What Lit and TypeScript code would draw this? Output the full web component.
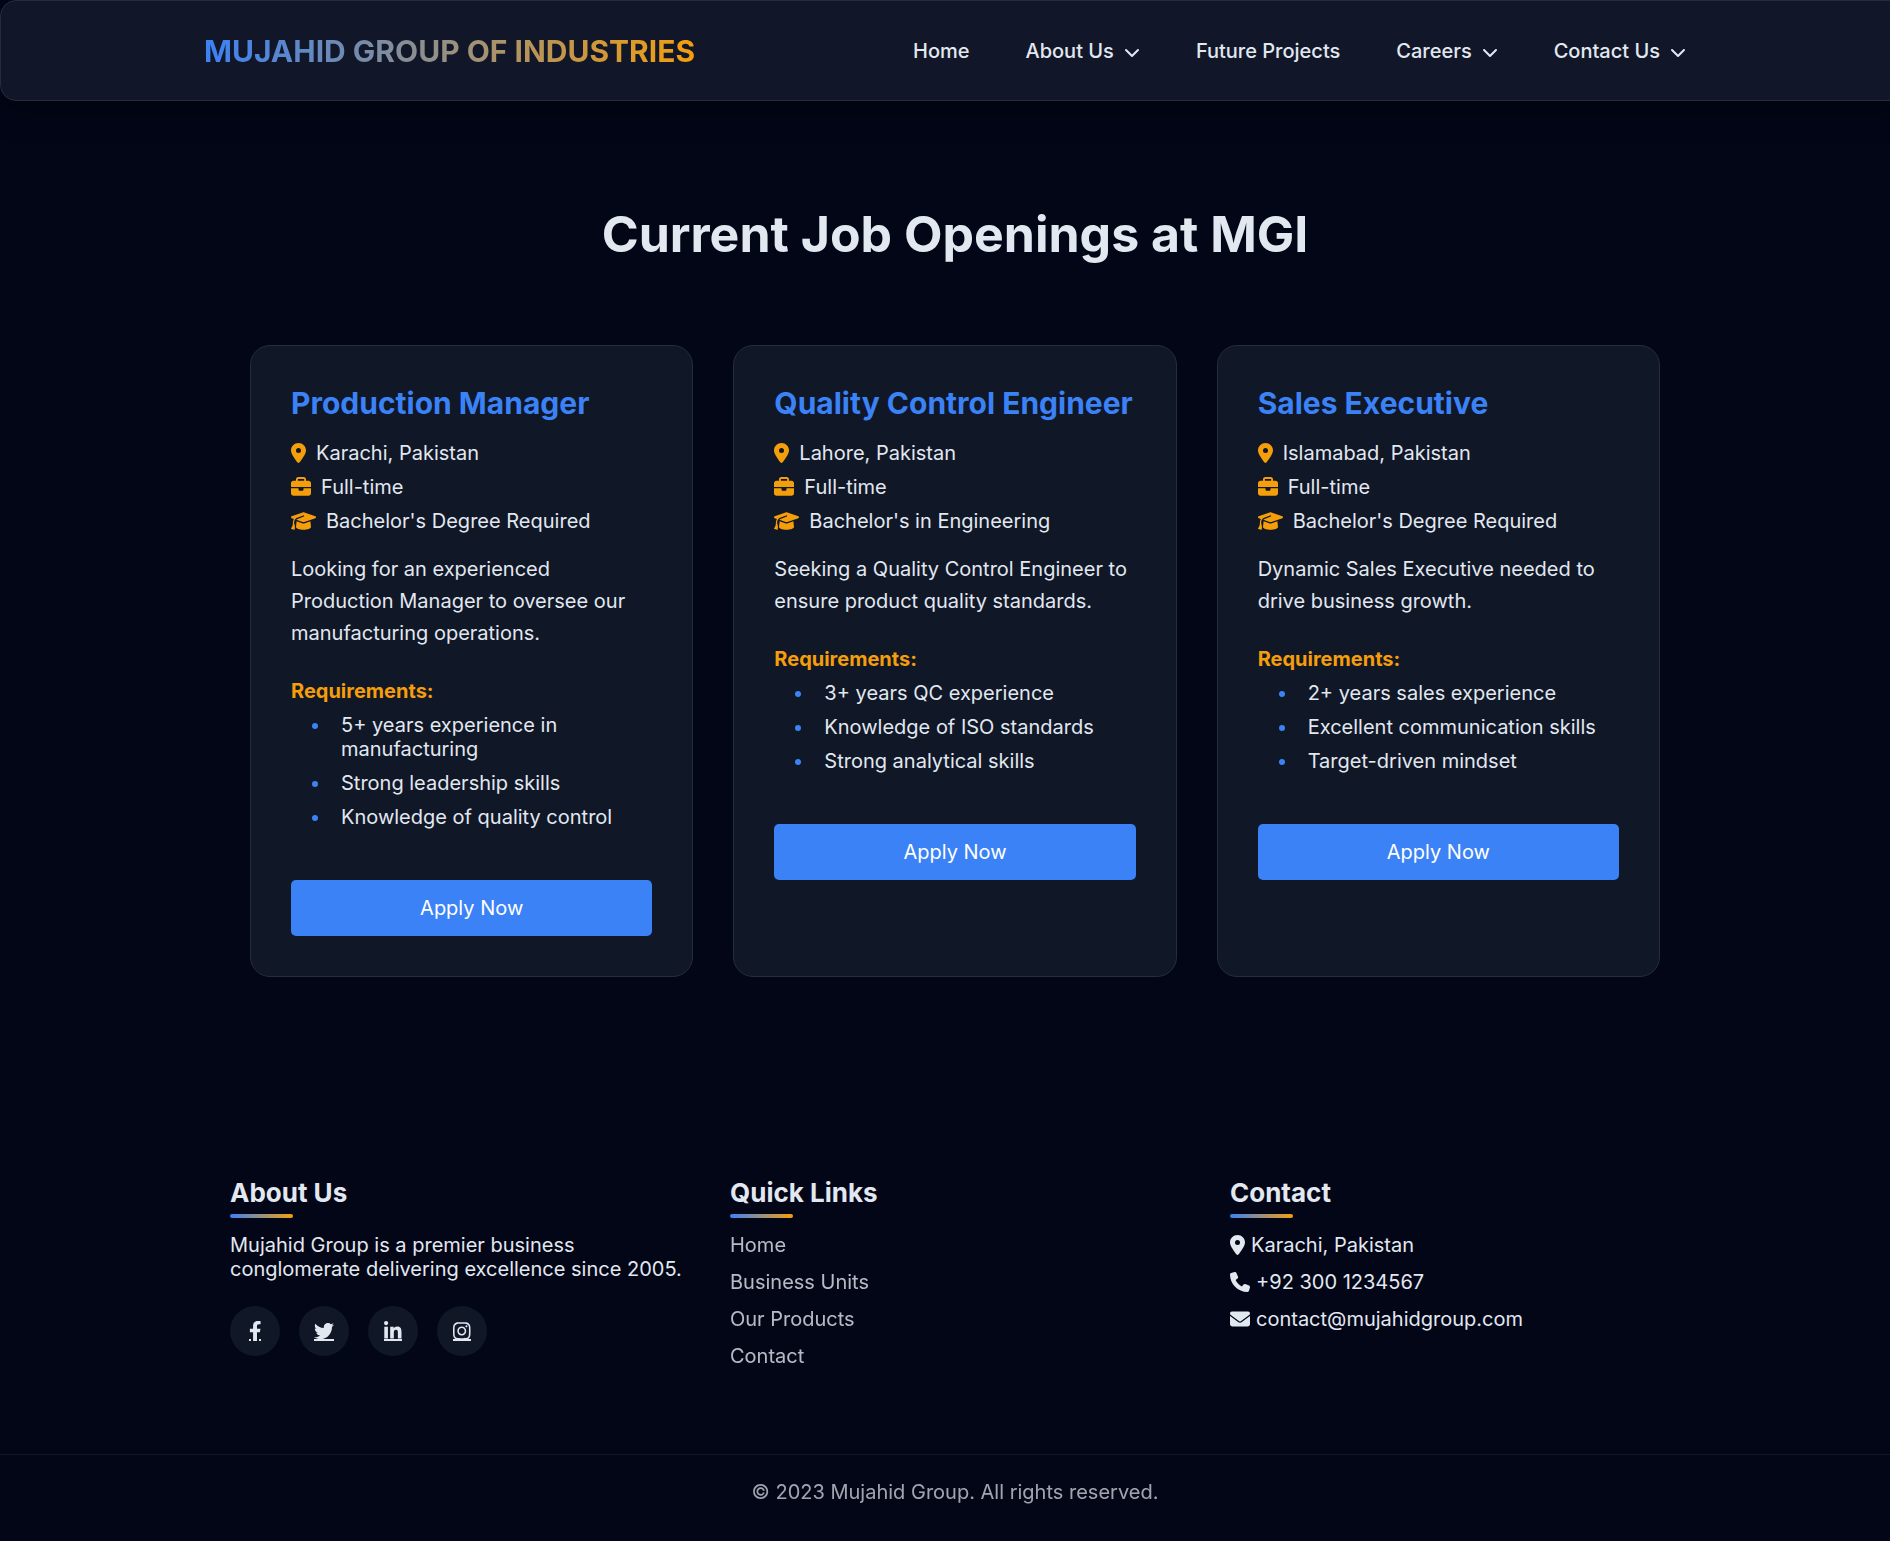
import { LitElement, html, svg, css, nothing } from "lit";
import { customElement } from "lit/decorators.js";

interface Icon { w: number; d: string; }

const icons: Record<string, Icon> = {
  pin: { w: 384, d: "M215.7 499.2C267 435 384 279.4 384 192C384 86 298 0 192 0S0 86 0 192c0 87.4 117 243 168.3 307.2c12.3 15.3 35.1 15.3 47.4 0zM192 128a64 64 0 1 1 0 128 64 64 0 1 1 0-128z" },
  briefcase: { w: 512, d: "M184 48H328c4.400 0 8 3.600 8 8V96H176V56c0-4.400 3.600-8 8-8zm-56 8V96H64C28.700 96 0 124.700 0 160v96H192 320 512V160c0-35.300-28.700-64-64-64H384V56c0-30.900-25.100-56-56-56H184c-30.900 0-56 25.100-56 56zM512 288H320v32c0 17.700-14.300 32-32 32H224c-17.700 0-32-14.300-32-32V288H0V416c0 35.300 28.700 64 64 64H448c35.300 0 64-28.700 64-64V288z" },
  cap: { w: 640, d: "M320 32c-8.100 0-16.100 1.400-23.700 4.100L15.800 137.400C6.300 140.900 0 149.900 0 160s6.300 19.100 15.800 22.600l57.900 20.900C57.300 229.300 48 259.800 48 291.900v28.100c0 28.400-10.800 57.700-22.300 80.800c-6.500 13-13.900 25.800-22.500 37.600C0 442.700-.9 448.300 .9 453.400s6 8.900 11.200 10.200l64 16c4.200 1.100 8.700 .3 12.400-2s6.300-6.100 7.100-10.400c8.600-42.800 4.300-81.200-2.100-108.700C90.300 344.300 86 329.800 80 316.500V291.900c0-30.200 10.200-58.700 27.900-81.500c12.900-15.500 29.600-28 49.200-35.700l157-61.700c8.200-3.200 17.500 .8 20.700 9s-.8 17.500-9 20.700l-157 61.700c-12.400 4.900-23.300 12.400-32.200 21.600l159.600 57.600c7.600 2.700 15.600 4.100 23.700 4.100s16.100-1.400 23.700-4.100L624.200 182.600c9.500-3.400 15.800-12.500 15.800-22.600s-6.300-19.100-15.800-22.600L343.700 36.100C336.100 33.400 328.100 32 320 32zM128 408c0 35.300 86 72 192 72s192-36.700 192-72L496.700 262.600 354.500 314c-11.100 4-22.800 6-34.500 6s-23.500-2-34.500-6L143.300 262.600 128 408z" },
  phone: { w: 512, d: "M164.900 24.600c-7.700-18.600-28-28.500-47.400-23.200l-88 24C12.100 30.200 0 46 0 64C0 311.400 200.600 512 448 512c18 0 33.800-12.100 38.600-29.500l24-88c5.300-19.400-4.600-39.700-23.200-47.400l-96-40c-16.300-6.800-35.200-2.100-46.300 11.600L304.700 368C234.300 334.700 177.300 277.700 144 207.300L193.300 167c13.700-11.200 18.400-30 11.600-46.300l-40-96z" },
  mail: { w: 512, d: "M48 64C21.500 64 0 85.500 0 112c0 15.100 7.100 29.300 19.200 38.400L236.800 313.600c11.400 8.500 27 8.500 38.400 0L492.800 150.400c12.100-9.100 19.200-23.300 19.200-38.400c0-26.500-21.500-48-48-48H48zM0 176V384c0 35.300 28.700 64 64 64H448c35.300 0 64-28.700 64-64V176L294.400 339.200c-22.800 17.100-54 17.100-76.800 0L0 176z" },
  chevron: { w: 512, d: "M233.400 406.600c12.500 12.500 32.800 12.500 45.300 0l192-192c12.500-12.500 12.500-32.800 0-45.300s-32.800-12.500-45.300 0L256 338.700 86.600 169.400c-12.500-12.500-32.800-12.500-45.300 0s-12.500 32.800 0 45.300l192 192z" },
  facebook: { w: 320, d: "M279.140 288l14.220-92.660h-88.910v-60.130c0-25.350 12.420-50.060 52.240-50.060h40.420V6.260S260.430 0 225.360 0c-73.220 0-121.080 44.380-121.080 124.720v70.620H22.890V288h81.390v224h100.170V288z" },
  twitter: { w: 512, d: "M459.370 151.716c.325 4.548.325 9.097.325 13.645 0 138.720-105.583 298.558-298.558 298.558-59.452 0-114.680-17.219-161.137-47.106 8.447.974 16.568 1.299 25.340 1.299 49.055 0 94.213-16.568 130.274-44.832-46.132-.975-84.792-31.188-98.112-72.772 6.498.974 12.995 1.624 19.818 1.624 9.421 0 18.843-1.300 27.614-3.573-48.081-9.747-84.143-51.980-84.143-102.985v-1.299c13.969 7.797 30.214 12.670 47.431 13.319-28.264-18.843-46.781-51.005-46.781-87.391 0-19.492 5.197-37.360 14.294-52.954 51.655 63.675 129.300 105.258 216.365 109.807-1.624-7.797-2.599-15.918-2.599-24.040 0-57.828 46.782-104.934 104.934-104.934 30.213 0 57.502 12.670 76.670 33.137 23.715-4.548 46.456-13.320 66.599-25.340-7.798 24.366-24.366 44.833-46.132 57.827 21.117-2.273 41.584-8.122 60.426-16.243-14.292 20.791-32.161 39.308-52.628 54.253z" },
  linkedin: { w: 448, d: "M100.280 448H7.400V148.900h92.880zM53.790 108.100C24.090 108.100 0 83.500 0 53.800a53.790 53.790 0 0 1 107.580 0c0 29.700-24.100 54.300-53.790 54.300zM447.900 448h-92.680V302.400c0-34.700-.7-79.200-48.290-79.200-48.290 0-55.690 37.700-55.690 76.700V448h-92.780V148.900h89.080v40.800h1.300c12.400-23.500 42.690-48.300 87.880-48.300 94 0 111.280 61.900 111.280 142.300V448z" },
  instagram: { w: 448, d: "M224.100 141c-63.600 0-114.900 51.300-114.900 114.900s51.300 114.900 114.900 114.900S339 319.500 339 255.900 287.700 141 224.100 141zm0 189.600c-41.100 0-74.700-33.500-74.700-74.700s33.500-74.700 74.700-74.700 74.700 33.500 74.700 74.700-33.600 74.700-74.700 74.700zm146.400-194.300c0 14.900-12 26.800-26.800 26.800-14.900 0-26.800-12-26.800-26.800s12-26.800 26.800-26.800 26.800 12 26.800 26.800zm76.100 27.200c-1.700-35.900-9.900-67.700-36.200-93.900-26.200-26.200-58-34.400-93.900-36.200-37-2.100-147.900-2.100-184.900 0-35.800 1.700-67.600 9.900-93.900 36.100s-34.400 58-36.200 93.900c-2.100 37-2.100 147.900 0 184.900 1.700 35.900 9.900 67.700 36.200 93.900s58 34.400 93.900 36.200c37 2.100 147.900 2.100 184.900 0 35.900-1.700 67.700-9.900 93.900-36.200 26.200-26.200 34.400-58 36.200-93.900 2.100-37 2.100-147.800 0-184.800zM398.800 388c-7.800 19.600-22.900 34.700-42.600 42.600-29.500 11.700-99.500 9-132.100 9s-102.700 2.600-132.100-9c-19.600-7.800-34.700-22.900-42.600-42.600-11.700-29.500-9-99.500-9-132.100s-2.600-102.700 9-132.100c7.800-19.600 22.900-34.700 42.600-42.600 29.500-11.700 99.500-9 132.100-9s102.700-2.600 132.100 9c19.600 7.800 34.700 22.900 42.600 42.600 11.700 29.500 9 99.500 9 132.100s2.700 102.700-9 132.100z" },
};

const glyph = (name: string, cls = "icon") => {
  const i = icons[name];
  return html`<svg class=${cls} viewBox="0 0 ${i.w} 512" aria-hidden="true">${svg`<path d=${i.d}></path>`}</svg>`;
};

const navItems = [
  { label: "Home", menu: false },
  { label: "About Us", menu: true },
  { label: "Future Projects", menu: false },
  { label: "Careers", menu: true },
  { label: "Contact Us", menu: true },
];

const jobs = [
  {
    title: "Production Manager", place: "Karachi, Pakistan", type: "Full-time", degree: "Bachelor's Degree Required",
    text: "Looking for an experienced Production Manager to oversee our manufacturing operations.",
    needs: ["5+ years experience in manufacturing", "Strong leadership skills", "Knowledge of quality control"],
  },
  {
    title: "Quality Control Engineer", place: "Lahore, Pakistan", type: "Full-time", degree: "Bachelor's in Engineering",
    text: "Seeking a Quality Control Engineer to ensure product quality standards.",
    needs: ["3+ years QC experience", "Knowledge of ISO standards", "Strong analytical skills"],
  },
  {
    title: "Sales Executive", place: "Islamabad, Pakistan", type: "Full-time", degree: "Bachelor's Degree Required",
    text: "Dynamic Sales Executive needed to drive business growth.",
    needs: ["2+ years sales experience", "Excellent communication skills", "Target-driven mindset"],
  },
];

const socials = [
  { icon: "facebook", label: "Facebook" },
  { icon: "twitter", label: "Twitter" },
  { icon: "linkedin", label: "LinkedIn" },
  { icon: "instagram", label: "Instagram" },
];

@customElement("app-root")
export class AppRoot extends LitElement {
  static styles = css`
    :host {
      display: block;
      min-height: 100vh;
      overflow: hidden;
      background: #020617;
      color: #e2e8f0;
      font: 400 20px/24px Inter, "Liberation Sans", sans-serif;
    }
    * { box-sizing: border-box; }
    h1, h2, h3, p, ul { margin: 0; padding: 0; }
    a { color: inherit; text-decoration: none; }
    .icon { display: block; flex: none; height: 20px; fill: currentColor; }

    .header {
      margin-right: -20px;
      padding-right: 20px;
      background: #111728;
      border: 1px solid #262c3a;
      border-radius: 16px;
      box-shadow: 0 8px 32px rgba(0, 0, 0, 0.37);
    }
    .bar {
      display: flex;
      align-items: center;
      justify-content: space-between;
      max-width: 1482px;
      height: 99px;
      margin: 0 auto;
    }
    .logo {
      font-size: 30px;
      line-height: 36px;
      font-weight: 700;
      background: linear-gradient(90deg, #3b82f6, #f59e0b);
      -webkit-background-clip: text;
      background-clip: text;
      color: transparent;
    }
    .menu { display: flex; gap: 56px; list-style: none; font-weight: 500; }
    .menu a { display: flex; align-items: center; gap: 10px; }
    .chevron { height: 16px; width: 16px; margin-top: 3px; fill: currentColor; }

    .page { margin-right: -20px; }
    .main { max-width: 1450px; margin: 0 auto; padding: 103px 20px 150px; }
    .title { font-size: 50px; line-height: 60px; font-weight: 700; text-align: center; margin-bottom: 81px; }
    .jobs { display: grid; grid-template-columns: repeat(3, 1fr); gap: 40px; }
    .job { padding: 39px 40px 40px; background: #101727; border: 1px solid #262c3a; border-radius: 20px; }
    .name { color: #3b82f6; font-size: 30px; line-height: 36px; font-weight: 700; margin-bottom: 20px; }
    .facts { display: grid; gap: 10px; list-style: none; margin-bottom: 20px; }
    .facts li { display: flex; align-items: center; gap: 10px; }
    .facts .icon { color: #f59e0b; }
    .text { line-height: 32px; margin-bottom: 30px; }
    .label { color: #f59e0b; font-size: 20px; line-height: 24px; font-weight: 700; margin-bottom: 10px; }
    .needs { padding-left: 40px; margin-bottom: 51px; }
    .needs li { padding-left: 10px; margin-bottom: 10px; }
    .needs li::marker { color: #3b82f6; }
    .apply {
      display: block;
      width: 100%;
      padding: 16px;
      border: 0;
      border-radius: 5px;
      background: #3b82f6;
      color: #fff;
      font: inherit;
      cursor: pointer;
    }

    .columns {
      display: grid;
      grid-template-columns: repeat(3, 1fr);
      gap: 50px;
      max-width: 1450px;
      margin: 0 auto;
      padding: 50px 0 86px;
    }
    .about { margin-right: -10px; }
    .heading { font-size: 26px; line-height: 32px; font-weight: 700; }
    .heading::after {
      content: "";
      display: block;
      width: 63px;
      height: 4px;
      margin: 5px 0 15px;
      border-radius: 2px;
      background: linear-gradient(90deg, #3b82f6, #f59e0b);
    }
    .links { display: grid; gap: 13px; list-style: none; }
    .links a { opacity: 0.8; }
    .contact { display: flex; align-items: center; gap: 6px; }
    .socials { display: flex; gap: 19px; margin-top: 25px; }
    .social {
      display: grid;
      place-items: center;
      width: 50px;
      height: 50px;
      border-radius: 50%;
      background: #101727;
    }
    .mark { position: relative; }
    .mark::after {
      content: "";
      position: absolute;
      left: 0;
      right: 0;
      bottom: 0;
      height: 2px;
      background: currentColor;
    }
    .mark.facebook::after {
      background: linear-gradient(90deg, currentColor 2px, transparent 2px calc(100% - 2px), currentColor calc(100% - 2px));
    }
    .legal { border-top: 1px solid #111524; padding: 25px; text-align: center; }
    .legal p { opacity: 0.7; }
  `;

  render() {
    return html`
      <header class="header">
        <div class="bar">
          <a class="logo" href="#">MUJAHID GROUP OF INDUSTRIES</a>
          <nav aria-label="Main">
            <ul class="menu">
              ${navItems.map((n) => html`<li><a href="#">${n.label}${n.menu ? glyph("chevron", "chevron") : nothing}</a></li>`)}
            </ul>
          </nav>
        </div>
      </header>
      <div class="page">
        <main class="main">
          <h1 class="title">Current Job Openings at MGI</h1>
          <div class="jobs">
            ${jobs.map((j) => html`
              <article class="job">
                <h2 class="name">${j.title}</h2>
                <ul class="facts">
                  <li>${glyph("pin")}<span>${j.place}</span></li>
                  <li>${glyph("briefcase")}<span>${j.type}</span></li>
                  <li>${glyph("cap")}<span>${j.degree}</span></li>
                </ul>
                <p class="text">${j.text}</p>
                <h3 class="label">Requirements:</h3>
                <ul class="needs">${j.needs.map((r) => html`<li>${r}</li>`)}</ul>
                <button class="apply" type="button">Apply Now</button>
              </article>`)}
          </div>
        </main>
        <footer>
          <div class="columns">
            <section>
              <h3 class="heading">About Us</h3>
              <p class="about">Mujahid Group is a premier business conglomerate delivering excellence since 2005.</p>
              <div class="socials">
                ${socials.map((s) => html`<a class="social" href="#" aria-label=${s.label}><span class="mark ${s.icon}">${glyph(s.icon)}</span></a>`)}
              </div>
            </section>
            <section>
              <h3 class="heading">Quick Links</h3>
              <ul class="links">
                ${["Home", "Business Units", "Our Products", "Contact"].map((l) => html`<li><a href="#">${l}</a></li>`)}
              </ul>
            </section>
            <section>
              <h3 class="heading">Contact</h3>
              <ul class="links">
                <li class="contact">${glyph("pin")}<span>Karachi, Pakistan</span></li>
                <li class="contact">${glyph("phone")}<span>+92 300 1234567</span></li>
                <li class="contact">${glyph("mail")}<span>contact@mujahidgroup.com</span></li>
              </ul>
            </section>
          </div>
          <div class="legal"><p>© 2023 Mujahid Group. All rights reserved.</p></div>
        </footer>
      </div>
    `;
  }
}
